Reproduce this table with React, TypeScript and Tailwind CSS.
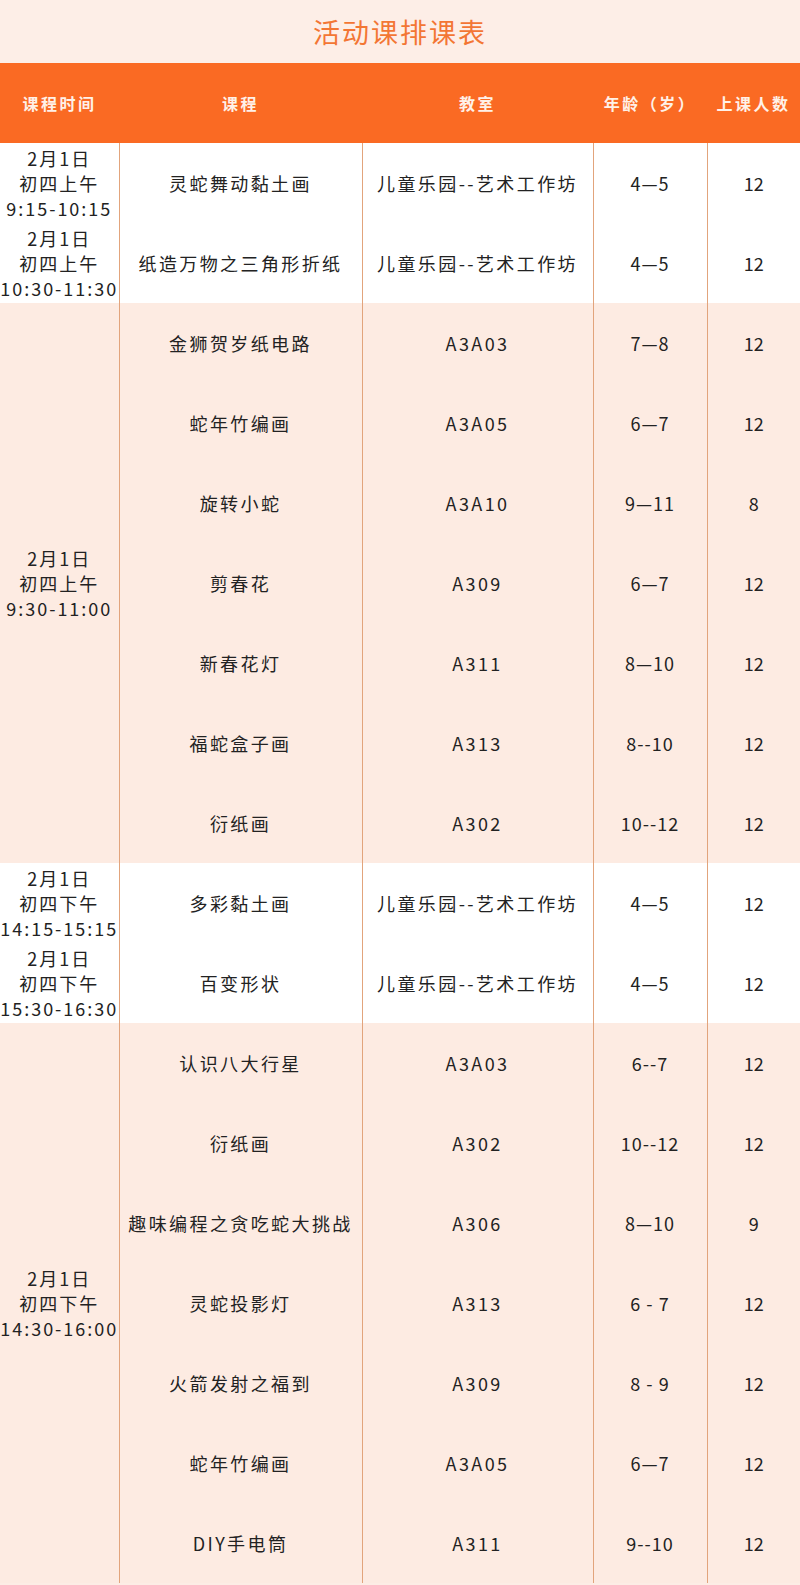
import React from 'react'

type Course = {
  name: string
  room: string
  age: string
  count: string
}

type Slot = {
  date: string
  day: string
  time: string
  tint: boolean
  courses: Course[]
}

const ART = '儿童乐园--艺术工作坊'

const slots: Slot[] = [
  {
    date: '2月1日',
    day: '初四上午',
    time: '9:15-10:15',
    tint: false,
    courses: [{ name: '灵蛇舞动黏土画', room: ART, age: '4—5', count: '12' }],
  },
  {
    date: '2月1日',
    day: '初四上午',
    time: '10:30-11:30',
    tint: false,
    courses: [{ name: '纸造万物之三角形折纸', room: ART, age: '4—5', count: '12' }],
  },
  {
    date: '2月1日',
    day: '初四上午',
    time: '9:30-11:00',
    tint: true,
    courses: [
      { name: '金狮贺岁纸电路', room: 'A3A03', age: '7—8', count: '12' },
      { name: '蛇年竹编画', room: 'A3A05', age: '6—7', count: '12' },
      { name: '旋转小蛇', room: 'A3A10', age: '9—11', count: '8' },
      { name: '剪春花', room: 'A309', age: '6—7', count: '12' },
      { name: '新春花灯', room: 'A311', age: '8—10', count: '12' },
      { name: '福蛇盒子画', room: 'A313', age: '8--10', count: '12' },
      { name: '衍纸画', room: 'A302', age: '10--12', count: '12' },
    ],
  },
  {
    date: '2月1日',
    day: '初四下午',
    time: '14:15-15:15',
    tint: false,
    courses: [{ name: '多彩黏土画', room: ART, age: '4—5', count: '12' }],
  },
  {
    date: '2月1日',
    day: '初四下午',
    time: '15:30-16:30',
    tint: false,
    courses: [{ name: '百变形状', room: ART, age: '4—5', count: '12' }],
  },
  {
    date: '2月1日',
    day: '初四下午',
    time: '14:30-16:00',
    tint: true,
    courses: [
      { name: '认识八大行星', room: 'A3A03', age: '6--7', count: '12' },
      { name: '衍纸画', room: 'A302', age: '10--12', count: '12' },
      { name: '趣味编程之贪吃蛇大挑战', room: 'A306', age: '8—10', count: '9' },
      { name: '灵蛇投影灯', room: 'A313', age: '6 - 7', count: '12' },
      { name: '火箭发射之福到', room: 'A309', age: '8 - 9', count: '12' },
      { name: '蛇年竹编画', room: 'A3A05', age: '6—7', count: '12' },
      { name: 'DIY手电筒', room: 'A311', age: '9--10', count: '12' },
    ],
  },
]

const headers = ['课程时间', '课程', '教室', '年龄（岁）', '上课人数']

export default function App() {
  return (
    <div
      className="w-[800px] min-h-[1585px] bg-[#fdede5] text-[#222]"
      style={{ fontFamily: '"Noto Sans CJK SC", "Noto Sans", sans-serif' }}
    >
      {/* Title */}
      <div className="h-[63px] flex items-center justify-center bg-[#fdeee7]">
        <h1 className="text-[27px] tracking-[2px] text-[#f37634] font-normal leading-none">
          活动课排课表
        </h1>
      </div>

      <table className="w-full table-fixed border-collapse">
        <colgroup>
          <col className="w-[119px]" />
          <col className="w-[243px]" />
          <col className="w-[231px]" />
          <col className="w-[114px]" />
          <col />
        </colgroup>
        <thead>
          <tr className="h-[80px] bg-[#fa6a23]">
            {headers.map((h) => (
              <th
                key={h}
                className="p-0 text-center align-middle text-[16px] font-bold tracking-[2.5px] text-[#fff1e8]"
              >
                {h}
              </th>
            ))}
          </tr>
        </thead>
        <tbody>
          {slots.map((slot, si) =>
            slot.courses.map((c, ci) => (
              <tr
                key={`${si}-${ci}`}
                className={`h-[80px] ${slot.tint ? 'bg-[#fdebe2]' : 'bg-white'}`}
              >
                {ci === 0 && (
                  <td
                    rowSpan={slot.courses.length}
                    className="p-0 text-center align-middle text-[18px] leading-[25px] tracking-[2px]"
                  >
                    <div>{slot.date}</div>
                    <div>{slot.day}</div>
                    <div>{slot.time}</div>
                  </td>
                )}
                <td className="p-0 text-center align-middle text-[18px] tracking-[2.4px] border-l border-[#e2a47c]">
                  {c.name}
                </td>
                <td className="p-0 text-center align-middle text-[18px] tracking-[2.4px] border-l border-[#e2a47c]">
                  {c.room}
                </td>
                <td className="p-0 text-center align-middle text-[18px] tracking-[1px] border-l border-[#e2a47c] whitespace-pre">
                  {c.age}
                </td>
                <td className="p-0 text-center align-middle text-[18px] border-l border-[#e2a47c]">
                  {c.count}
                </td>
              </tr>
            ))
          )}
        </tbody>
      </table>
    </div>
  )
}
